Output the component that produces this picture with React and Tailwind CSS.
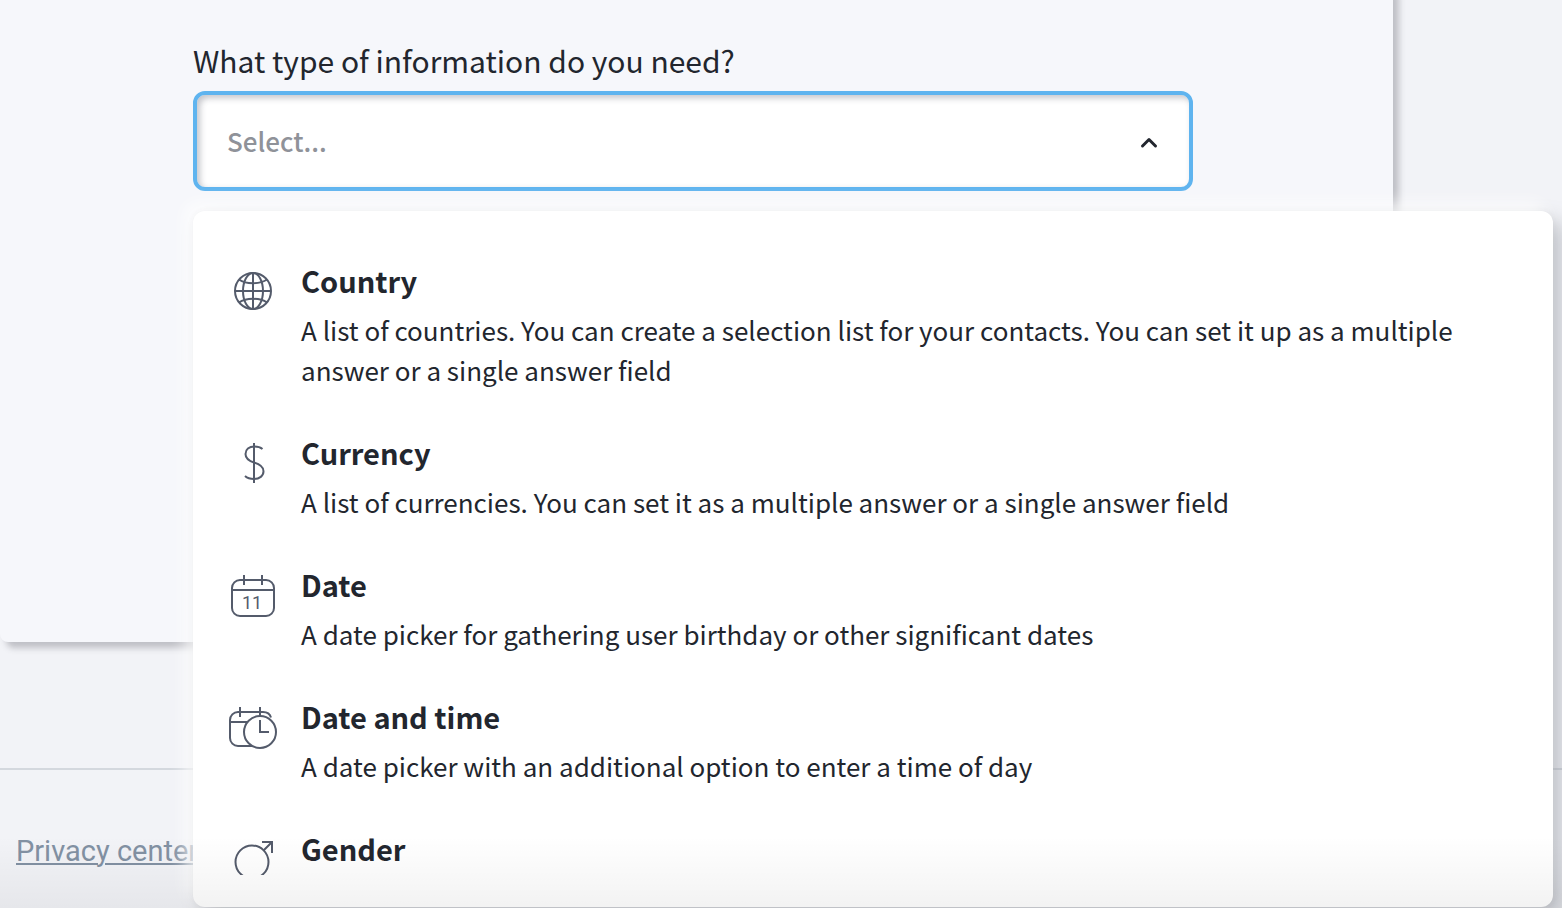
import React, { useState } from "react";

const iconProps = {
  viewBox: "0 0 48 48",
  fill: "none",
  stroke: "#545b6b",
  strokeWidth: 2,
  "aria-hidden": true,
  className: "mt-[5px] h-12 w-12 shrink-0",
};

function GlobeIcon() {
  return (
    <svg {...iconProps}>
      <circle cx="24" cy="24" r="18" />
      <ellipse cx="24" cy="24" rx="10" ry="18" />
      <path d="M24 6v36M6 24h36" />
      <path d="M10 12.500c3.500 2.500 8.500 3.700 14 3.700s10.500-1.200 14-3.700M10 35.500c3.500-2.500 8.500-3.700 14-3.700s10.500 1.200 14 3.700" />
    </svg>
  );
}

function DollarIcon() {
  return (
    <svg {...iconProps}>
      <path d="M25 4v40" />
      <path d="M33.500 10C31.500 8.300 28.500 7.500 25.500 7.500c-5.500 0-9 3.100-9 7.500 0 4.800 3.800 7 8.500 8.500 5.200 1.600 9.500 3.800 9.500 8.700 0 4.700-4 7.800-9.500 7.800-3.800 0-6.800-1-9-3" />
    </svg>
  );
}

function CalendarIcon() {
  return (
    <svg {...iconProps}>
      <rect x="3" y="9" width="42" height="36" rx="8" />
      <path d="M3 19h42M15 4v10M33 4v10" />
      <text
        x="23"
        y="38"
        textAnchor="middle"
        fill="#545b6b"
        stroke="none"
        className="font-[Roboto,sans-serif] text-[18px]"
      >
        11
      </text>
    </svg>
  );
}

function CalendarClockIcon() {
  return (
    <svg {...iconProps}>
      <path d="M42 14.500C41 11 38 9 34 9H9a8 8 0 0 0-8 8v18a8 8 0 0 0 8 8h14M1 19h17M11 4v10M31 4v9" />
      <circle cx="31" cy="29" r="16" />
      <path d="M31 17v12h9" />
    </svg>
  );
}

function GenderIcon() {
  return (
    <svg {...iconProps}>
      <circle cx="23" cy="27" r="16.500" />
      <path d="M34.500 15.500L43 7M33 7h10v11" />
    </svg>
  );
}

const fieldTypes = [
  {
    name: "Country",
    icon: GlobeIcon,
    description:
      "A list of countries. You can create a selection list for your contacts. You can set it up as a multiple answer or a single answer field",
  },
  {
    name: "Currency",
    icon: DollarIcon,
    description:
      "A list of currencies. You can set it as a multiple answer or a single answer field",
  },
  {
    name: "Date",
    icon: CalendarIcon,
    description:
      "A date picker for gathering user birthday or other significant dates",
  },
  {
    name: "Date and time",
    icon: CalendarClockIcon,
    description:
      "A date picker with an additional option to enter a time of day",
  },
  { name: "Gender", icon: GenderIcon },
];

function TypeMenu({ onPick }) {
  return (
    <div className="absolute top-full left-0 z-10 mt-5 -right-[360px] rounded-xl bg-white py-8 shadow-[0_0_6px_rgba(60,62,72,0.06),-8px_-8px_16px_rgba(255,255,255,0.8),10px_10px_20px_rgba(120,124,136,0.4)]">
      <ul className="flex h-[632px] flex-col gap-11 overflow-hidden pt-[19px] pr-14 pl-9">
        {fieldTypes.map(({ name, icon: Icon, description }) => (
          <li key={name}>
            <button
              type="button"
              onClick={() => onPick(name)}
              className="flex w-full items-start gap-6 text-left"
            >
              <Icon />
              <span className="flex flex-col gap-3">
                <span className="text-[29px] leading-9 font-bold">{name}</span>
                {description && (
                  <span className="text-[26px] leading-10">{description}</span>
                )}
              </span>
            </button>
          </li>
        ))}
      </ul>
    </div>
  );
}

function App() {
  const [open, setOpen] = useState(true);
  const [value, setValue] = useState("");

  const handlePick = (name) => {
    setValue(name);
    setOpen(false);
  };

  // The native popup is replaced by TypeMenu
  const handleMouseDown = (e) => {
    e.preventDefault();
    setOpen((prev) => !prev);
  };

  return (
    <div className="relative flow-root min-h-screen overflow-hidden bg-[#f2f3f7] font-['Noto_Sans_CJK_SC',sans-serif] text-[#22262e]">
      <main className="-mt-3 mr-[169px] min-h-[654px] rounded-b-lg bg-[#f6f7fb] pt-[52px] pr-[200px] pl-[193px] shadow-[6px_6px_6px_rgba(60,62,72,0.28)]">
        <label htmlFor="info-type" className="block text-[30px] leading-10">
          What type of information do you need?
        </label>
        <div className="relative mt-[11px]">
          <select
            id="info-type"
            value={value}
            onMouseDown={handleMouseDown}
            onChange={(e) => handlePick(e.target.value)}
            className="block h-[100px] w-full appearance-none rounded-xl border-4 border-[#5fb4ef] bg-white px-[30px] pb-[2px] text-[26px] font-medium text-[#8f9299] shadow-[inset_3px_3px_6px_rgba(60,64,80,0.3)] outline-none"
          >
            <option value="">Select...</option>
            {fieldTypes.map(({ name }) => (
              <option key={name} value={name}>
                {name}
              </option>
            ))}
          </select>
          <svg
            viewBox="0 0 20 20"
            fill="none"
            stroke="#22262e"
            strokeWidth="3"
            strokeLinecap="round"
            strokeLinejoin="round"
            aria-hidden="true"
            className="pointer-events-none absolute top-[42px] right-[34px] h-5 w-5"
          >
            <path d="M3.500 13L10 6.500l6.500 6.500" />
          </svg>
          {open && <TypeMenu onPick={handlePick} />}
        </div>
      </main>

      <footer className="mt-[126px] border-t-2 border-[#d4d8de] px-4 pt-[61px]">
        <a
          href="#privacy"
          className="font-[Roboto,sans-serif] text-[29px] leading-10 text-[#8291a3] underline decoration-2 underline-offset-2"
        >
          Privacy center
        </a>
      </footer>

      <div className="pointer-events-none absolute inset-x-0 bottom-0 z-20 h-[72px] bg-linear-to-b from-transparent to-black/5" />
    </div>
  );
}

export default App;
